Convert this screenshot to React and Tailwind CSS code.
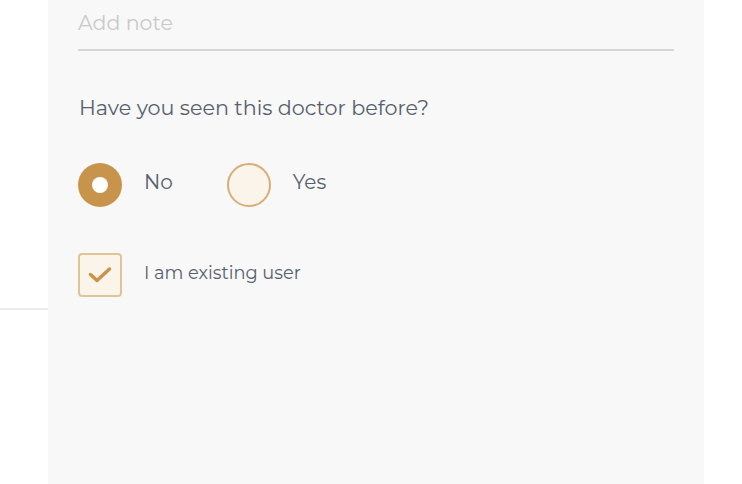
import React, { useState } from 'react';

const font = { fontFamily: 'Montserrat, Inter, "Noto Sans", sans-serif' };

const Radio = ({ checked, label, onClick }) => (
  <button type="button" onClick={onClick} className="flex items-center gap-[22px]">
    {checked ? (
      <span className="w-[44px] h-[44px] rounded-full bg-[#c8944c] flex items-center justify-center">
        <span className="w-[16px] h-[16px] rounded-full bg-white" />
      </span>
    ) : (
      <span className="w-[44px] h-[44px] rounded-full bg-[#fbf4ea] border-2 border-[#d6ae76]" />
    )}
    <span className="text-[20px] text-[#56606d] leading-none -mt-[7px]">{label}</span>
  </button>
);

export default function App() {
  const [seen, setSeen] = useState('no');
  const [existing, setExisting] = useState(true);

  return (
    <div className="flex w-[742px] h-[484px] bg-white overflow-hidden" style={font}>
      {/* left gutter */}
      <div className="w-[48px] shrink-0 pt-[308px]">
        <div className="h-[2px] bg-[#ececec]" />
      </div>

      {/* form panel */}
      <div className="w-[656px] shrink-0 bg-[#f8f8f8] pl-[30px] pr-[30px]">
        <div className="border-b-2 border-[#d6d6d6] h-[51px] pt-[10px]">
          <input
            placeholder="Add note"
            className="w-full bg-transparent outline-none text-[20.5px] leading-[26px] text-[#56606d] placeholder:text-[#c9c9c9]"
          />
        </div>

        <p className="mt-[44px] ml-[1px] text-[20.7px] leading-[26px] text-[#56606d]">
          Have you seen this doctor before?
        </p>

        <div className="mt-[42px] flex items-center gap-[54px]">
          <Radio checked={seen === 'no'} label="No" onClick={() => setSeen('no')} />
          <Radio checked={seen === 'yes'} label="Yes" onClick={() => setSeen('yes')} />
        </div>

        <button
          type="button"
          onClick={() => setExisting(!existing)}
          className="mt-[46px] flex items-center gap-[22px]"
        >
          <span className="w-[44px] h-[44px] rounded-[4px] bg-[#fbf4ea] border-2 border-[#dfc495] flex items-center justify-center">
            {existing && (
              <svg width="24" height="18" viewBox="0 0 24 18" fill="none">
                <path d="M2.5 8.5 L9 14.5 L21.5 3" stroke="#c8944c" strokeWidth="3.5" strokeLinecap="round" strokeLinejoin="round" />
              </svg>
            )}
          </span>
          <span className="text-[17.8px] text-[#56606d] leading-none -mt-[4px]">I am existing user</span>
        </button>
      </div>

      {/* right gutter */}
      <div className="flex-1 bg-white" />
    </div>
  );
}
